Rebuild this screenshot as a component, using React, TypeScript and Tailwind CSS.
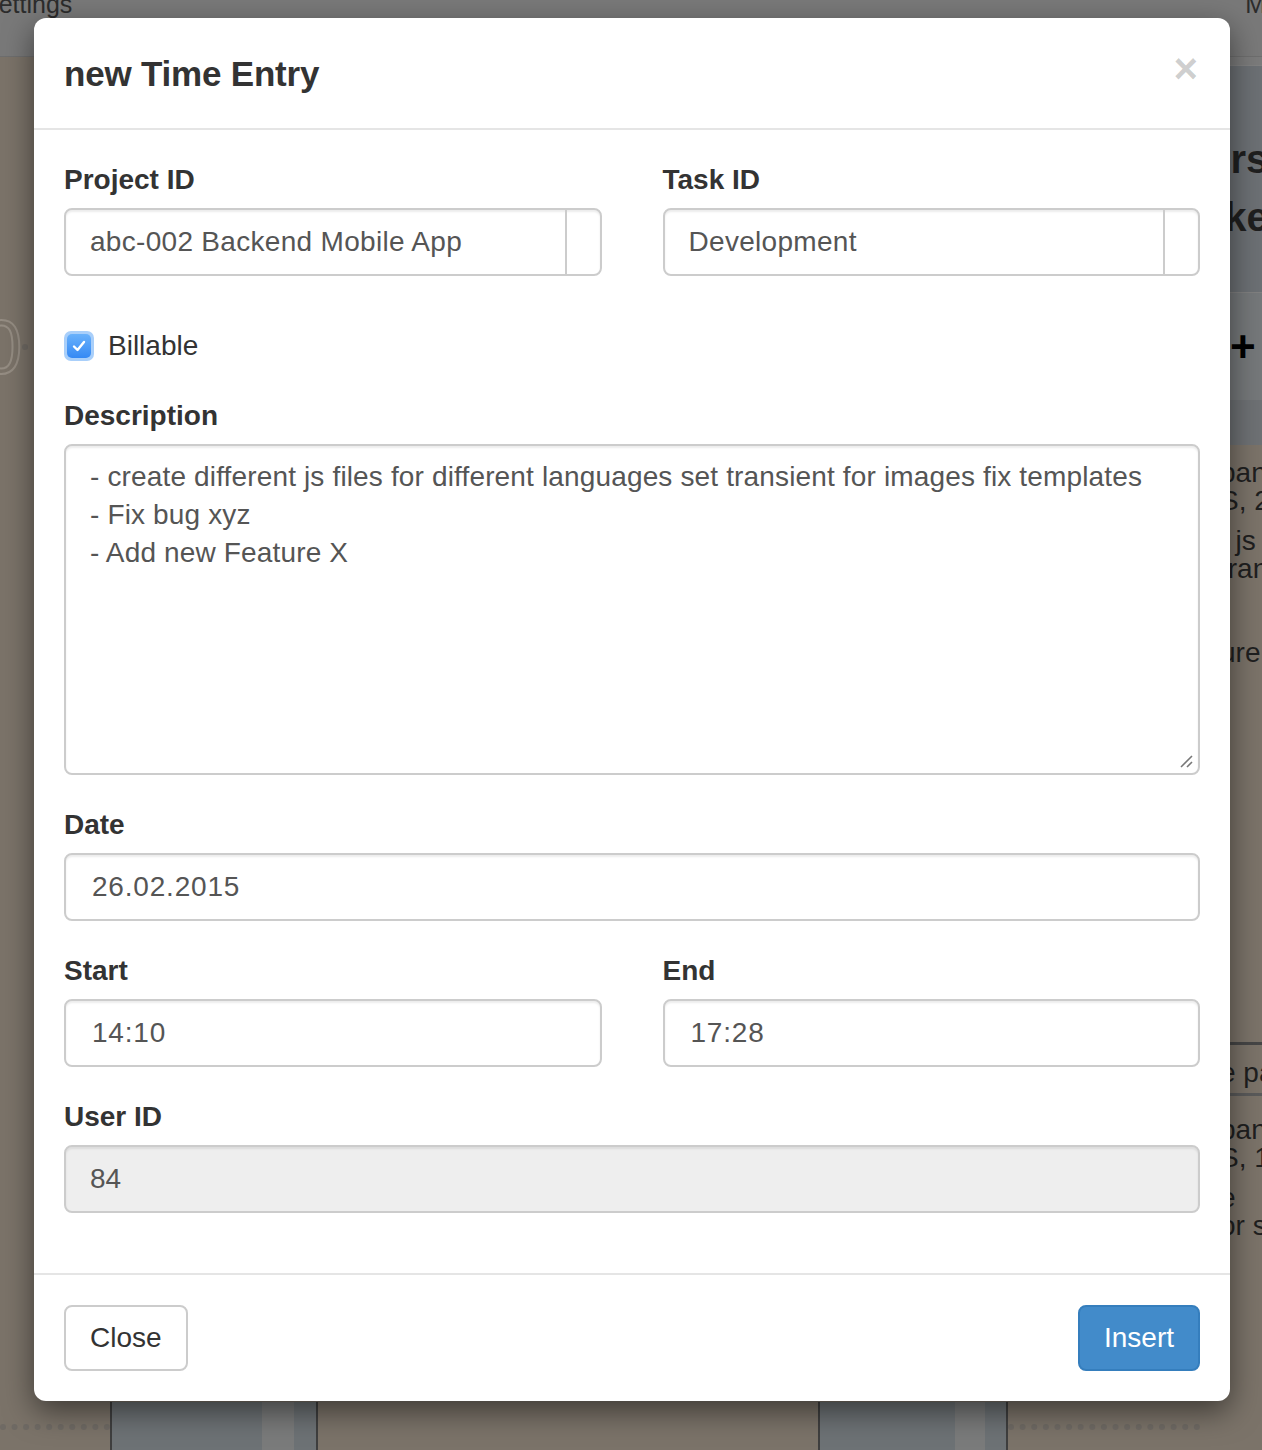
import React from "react";

function Field({ label, children, last = false }: { label: string; children: React.ReactNode; last?: boolean }) {
  return (
    <div className={last ? "" : "mb-[30px]"}>
      <label className="block text-[28px] leading-[40px] font-bold text-[#333] mb-[8px]">{label}</label>
      {children}
    </div>
  );
}

function Input({ value, mono = false, disabled = false }: { value: string; mono?: boolean; disabled?: boolean }) {
  return (
    <div
      className={
        "h-[68px] border-2 border-[#ccc] rounded-[8px] flex items-center text-[28px] text-[#555] shadow-[inset_0_2px_2px_rgba(0,0,0,0.075)] " +
        (disabled ? "bg-[#eee] px-[24px]" : "bg-white ") +
        (mono ? "pl-[26px] tracking-[0.8px]" : disabled ? "" : "px-[24px]")
      }
    >
      {value}
    </div>
  );
}

function Select({ value }: { value: string }) {
  return (
    <div className="h-[68px] border-2 border-[#ccc] rounded-[8px] flex text-[28px] text-[#555] bg-white shadow-[inset_0_2px_2px_rgba(0,0,0,0.075)]">
      <div className="flex-1 flex items-center px-[24px] whitespace-nowrap tracking-[0.3px]">{value}</div>
      <div className="w-[35px] border-l-2 border-[#ccc]" />
    </div>
  );
}

function Background() {
  return (
    <div className="absolute inset-0 flex flex-col bg-[#7b7369]">
      <div className="h-[57px] bg-[#797979] border-b border-[#6e6e6e] flex justify-between overflow-hidden">
        <span className="text-[25px] leading-none -mt-[8px] -ml-[18px] text-[#2c2c2c]">Settings</span>
        <span className="text-[25px] leading-none -mt-[8px] -mr-[4px] text-[#2c2c2c]">M</span>
      </div>
      <div className="flex-1 flex">
        <div className="flex-1 flex flex-col">
          <div className="h-[250px]" />
          <div className="h-[80px] flex items-center">
            <span className="text-[76px] leading-none text-transparent [-webkit-text-stroke:2px_#958d83] -ml-[20px]">0</span>
            <div className="flex-1 border-t-[6px] border-dotted border-[#6f6a64] mr-[40px]" />
          </div>
          <div className="flex-1" />
          <div className="h-[48px] flex">
            <div className="w-[110px] relative overflow-hidden">
              <div className="mt-[22px] border-t-[6px] border-dotted border-[#6f6a64]" />
            </div>
            <div className="w-[208px] bg-[#6d7275] border-x-2 border-[#3f3f3f] flex">
              <div className="w-[150px]" />
              <div className="w-[32px] bg-[#7a7b7b]" />
            </div>
            <div className="w-[500px]" />
            <div className="w-[190px] bg-[#6d7275] border-x-2 border-[#3f3f3f] flex">
              <div className="w-[135px]" />
              <div className="w-[30px] bg-[#7a7b7b]" />
            </div>
            <div className="flex-1">
              <div className="mt-[22px] border-t-[6px] border-dotted border-[#6f6a64]" />
            </div>
          </div>
        </div>
        <div className="w-[62px] flex flex-col overflow-hidden text-[#1f1f1f]">
          <div className="h-[8px] bg-[#7b7b7b]" />
          <div className="h-[228px] bg-[#6c7074] border-y border-[#808080] flex flex-col pt-[64px] whitespace-nowrap font-bold text-[40px] leading-[58px]">
            <span className="pl-[6px]">urs</span>
            <span className="pl-[2px]">cke</span>
          </div>
          <div className="h-[107px] bg-[#75787a] flex items-center pl-[30px]">
            <span className="text-[44px] font-bold leading-none text-black">+</span>
          </div>
          <div className="h-[45px] bg-[#6e7174]" />
          <div className="flex flex-col text-[28px] leading-[28px] whitespace-nowrap pl-[20px] pt-[14px]">
            <span>pant</span>
            <span>S, 2</span>
            <span className="mt-[12px]">t js</span>
            <span>tran</span>
            <span className="mt-[56px]">ure</span>
          </div>
          <div className="flex-1" />
          <div className="border-t-[3px] border-[#464646] pt-[14px] text-[28px] leading-[28px] whitespace-nowrap pl-[20px]">e pa</div>
          <div className="mt-[6px] border-t-[3px] border-[#5a5a5a]" />
          <div className="flex flex-col text-[28px] leading-[28px] whitespace-nowrap pl-[20px] pt-[20px]">
            <span>pant</span>
            <span>S, 1</span>
            <span className="mt-[12px]">e</span>
            <span>or st</span>
          </div>
          <div className="h-[210px]" />
        </div>
      </div>
    </div>
  );
}

export default function App() {
  return (
    <div className="relative w-[1262px] h-[1450px] overflow-hidden font-['Liberation_Sans',Arial,sans-serif]">
      <Background />
      <div className="absolute left-[34px] top-[18px] w-[1196px] bg-white rounded-[12px] shadow-[0_10px_30px_rgba(0,0,0,0.5)]">
        <div className="px-[30px] py-[30px] border-b-2 border-[#e5e5e5] flex items-start justify-between h-[112px]">
          <h4 className="text-[35px] leading-[51px] font-bold text-[#333] tracking-[-0.2px]">new Time Entry</h4>
          <button className="text-[42px] leading-none font-bold text-black/20 mt-[0px] mr-[2px]">×</button>
        </div>
        <div className="p-[30px]">
          <div className="grid grid-cols-2 gap-x-[61px]">
            <Field label="Project ID" last>
              <Select value="abc-002 Backend Mobile App" />
            </Field>
            <Field label="Task ID" last>
              <Select value="Development" />
            </Field>
          </div>
          <div className="mt-[50px] mb-[30px] h-[40px] flex items-center">
            <span className="w-[30px] h-[30px] rounded-[7px] bg-[#a9cffa] flex items-center justify-center">
              <span className="w-[24px] h-[24px] rounded-[5px] bg-gradient-to-b from-[#69b1fb] to-[#3589f4] flex items-center justify-center">
                <svg width="16" height="16" viewBox="0 0 16 16">
                  <path d="M3 8.5 L6.5 12 L13 4" fill="none" stroke="white" strokeWidth="2.4" strokeLinecap="round" strokeLinejoin="round" />
                </svg>
              </span>
            </span>
            <span className="ml-[14px] text-[28px] text-[#333]">Billable</span>
          </div>
          <Field label="Description">
            <div className="h-[331px] border-2 border-[#ccc] rounded-[8px] px-[24px] pt-[12px] text-[28px] leading-[38px] text-[#555] tracking-[0.15px] shadow-[inset_0_2px_2px_rgba(0,0,0,0.075)] relative">
              <div>- create different js files for different languages set transient for images fix templates</div>
              <div>- Fix bug xyz</div>
              <div>- Add new Feature X</div>
              <svg className="absolute right-[4px] bottom-[4px]" width="16" height="16" viewBox="0 0 16 16">
                <path d="M3 14 L14 3 M9 14 L14 9" stroke="#777" strokeWidth="1.6" />
              </svg>
            </div>
          </Field>
          <Field label="Date">
            <Input value="26.02.2015" mono />
          </Field>
          <div className="grid grid-cols-2 gap-x-[61px]">
            <Field label="Start">
              <Input value="14:10" mono />
            </Field>
            <Field label="End">
              <Input value="17:28" mono />
            </Field>
          </div>
          <Field label="User ID">
            <Input value="84" disabled />
          </Field>
        </div>
        <div className="border-t-2 border-[#e5e5e5] px-[30px] py-[30px] flex justify-between">
          <button className="h-[66px] px-[24px] border-2 border-[#ccc] rounded-[8px] bg-white text-[28px] text-[#333]">Close</button>
          <button className="h-[66px] px-[24px] border-2 border-[#357ebd] rounded-[8px] bg-[#428bca] text-[28px] text-white">Insert</button>
        </div>
      </div>
    </div>
  );
}
